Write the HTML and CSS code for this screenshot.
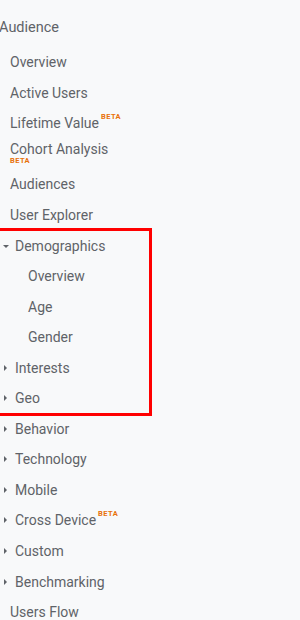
FILE: index.html
```html
<!DOCTYPE html>
<html lang="en">
<head>
  <meta charset="UTF-8">
  <title>Audience</title>
  <link rel="stylesheet" href="styles.css">
</head>
<body>
  <nav class="sidebar">
    <div class="section-title">Audience</div>
    <ul class="menu">
      <li class="item">Overview</li>
      <li class="item">Active Users</li>
      <li class="item">Lifetime Value<sup class="beta">BETA</sup></li>
      <li class="item item--stacked">Cohort Analysis<span class="beta beta--below">BETA</span></li>
      <li class="item">Audiences</li>
      <li class="item">User Explorer</li>
    </ul>
    <ul class="menu highlight">
      <li class="item item--group open"><span class="caret"></span>Demographics</li>
      <li class="item item--sub">Overview</li>
      <li class="item item--sub">Age</li>
      <li class="item item--sub">Gender</li>
      <li class="item item--group"><span class="caret"></span>Interests</li>
      <li class="item item--group"><span class="caret"></span>Geo</li>
    </ul>
    <ul class="menu">
      <li class="item item--group"><span class="caret"></span>Behavior</li>
      <li class="item item--group"><span class="caret"></span>Technology</li>
      <li class="item item--group"><span class="caret"></span>Mobile</li>
      <li class="item item--group"><span class="caret"></span>Cross Device<sup class="beta">BETA</sup></li>
      <li class="item item--group"><span class="caret"></span>Custom</li>
      <li class="item item--group"><span class="caret"></span>Benchmarking</li>
      <li class="item">Users Flow</li>
    </ul>
  </nav>
</body>
</html>
```

FILE: styles.css
```css
/* Reset */
* {
  box-sizing: border-box;
  margin: 0;
  padding: 0;
}
body {
  font-family: Roboto, "Liberation Sans", sans-serif;
  background: #f8f9fa;
  color: #5f6368;
  overflow: hidden;
}
.sidebar {
  padding-top: 18px;
}
.section-title {
  font-size: 14.5px;
  line-height: 20px;
  margin-left: -1px;
  margin-bottom: 9px;
}
.menu {
  list-style: none;
}
.item {
  display: flex;
  align-items: center;
  height: 30.55px;
  padding-left: 10px;
  font-size: 14px;
  white-space: nowrap;
}
.item--group {
  padding-left: 15px;
  position: relative;
}
.item--sub {
  padding-left: 28px;
}
.item--stacked {
  flex-direction: column;
  align-items: flex-start;
  justify-content: center;
  line-height: 15px;
  padding-bottom: 2px;
}
/* carets */
.caret {
  position: absolute;
  left: 4px;
  top: 50%;
  margin-top: -3px;
  width: 0;
  height: 0;
  border-top: 3px solid transparent;
  border-bottom: 3px solid transparent;
  border-left: 3.5px solid #5f6368;
}
.open .caret {
  left: 3px;
  margin-top: -1px;
  border-left: 3px solid transparent;
  border-right: 3px solid transparent;
  border-top: 3.5px solid #5f6368;
  border-bottom: 0;
}
/* BETA tags */
.beta {
  color: #e8710a;
  font-size: 7.5px;
  font-weight: 700;
  letter-spacing: 0.4px;
  align-self: flex-start;
  margin-top: 5px;
  margin-left: 2px;
  line-height: 1;
}
.beta--below {
  margin: 0;
  align-self: flex-start;
}
/* Highlight box */
.highlight {
  width: 154px;
  margin-left: -4px;
  padding-left: 4px;
  outline: 3px solid #ff0000;
  outline-offset: -1px;
}
```
